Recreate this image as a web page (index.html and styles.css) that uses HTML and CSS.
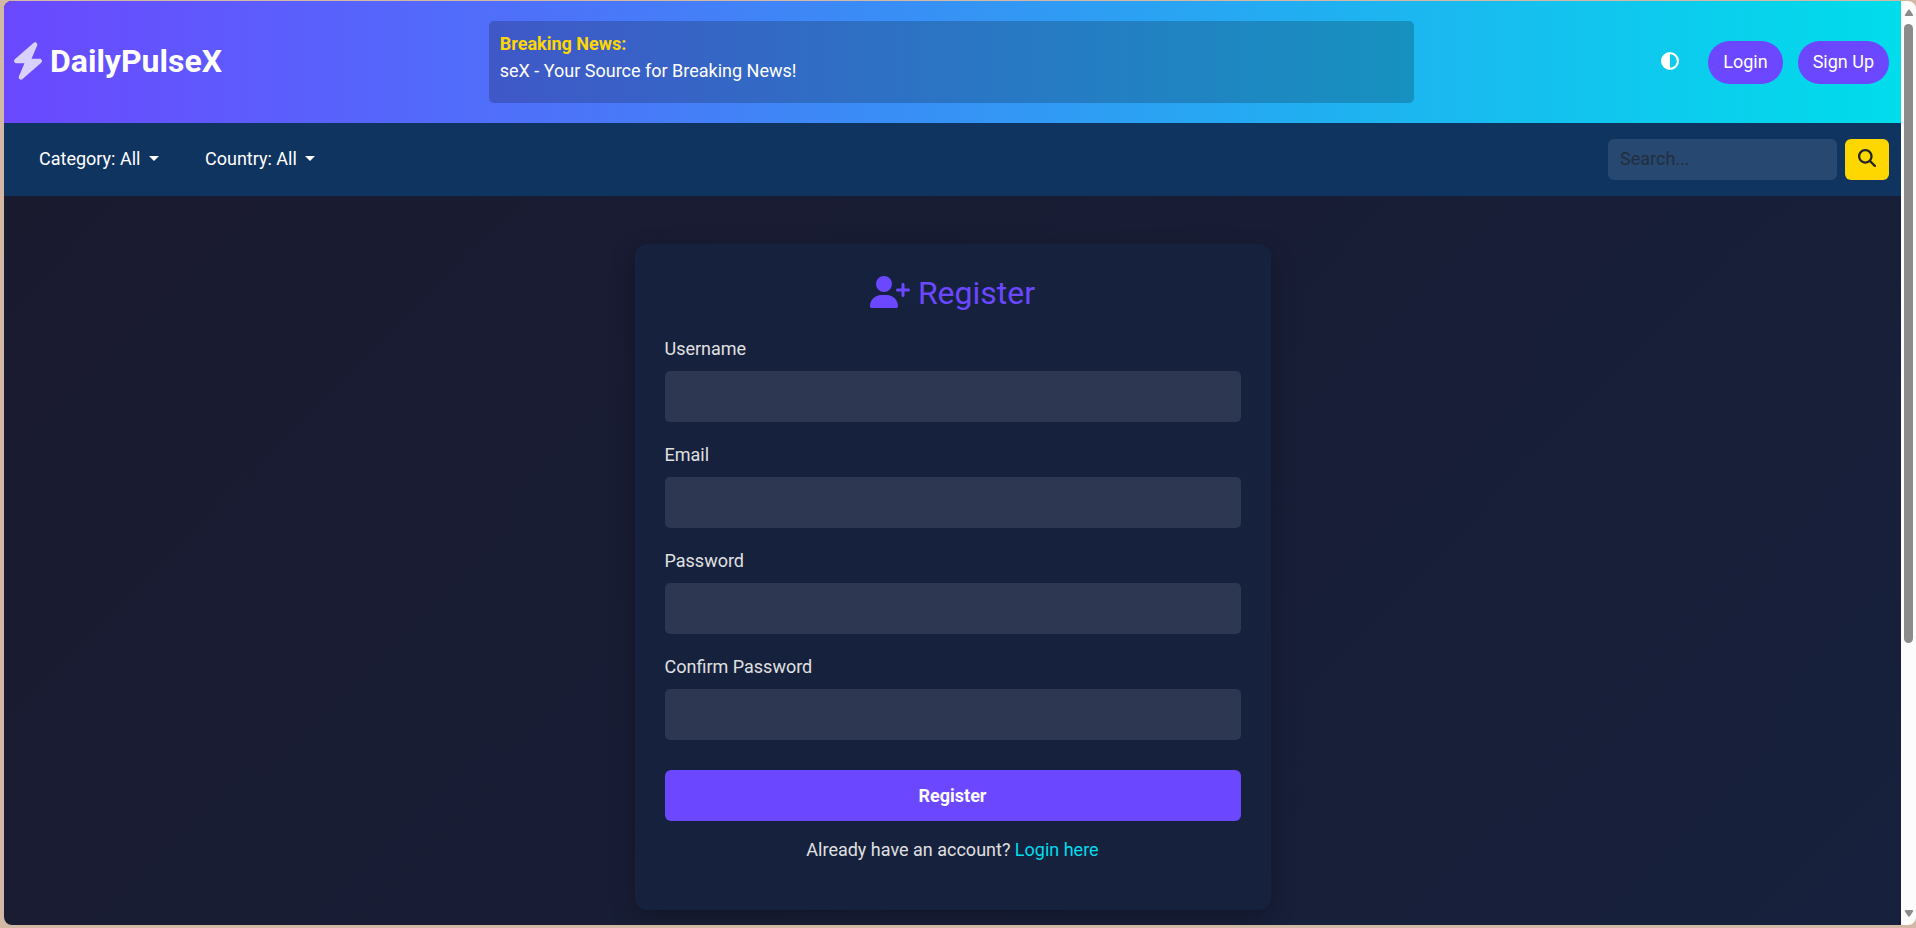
FILE: index.html
```html
<!DOCTYPE html>
<html lang="en">
<head>
<meta charset="utf-8">
<title>DailyPulseX - Register</title>
<link rel="stylesheet" href="styles.css">
</head>
<body>
<div class="window">
  <div class="page">
    <header class="header">
      <a class="brand" href="#">
        <svg class="brand-icon" viewBox="32 0 384 512" aria-hidden="true"><path d="M349.4 44.6c5.9-13.7 1.5-29.7-10.6-38.5s-28.6-8-39.9 1.8l-256 224c-10 8.8-13.6 22.9-8.9 35.3S50.7 288 64 288H175.5L98.6 467.4c-5.9 13.7-1.5 29.7 10.6 38.5s28.6 8 39.9-1.8l256-224c10-8.8 13.6-22.9 8.9-35.3s-16.6-20.7-30-20.7H272.5L349.4 44.6z"/></svg>
        <span>DailyPulseX</span>
      </a>
      <div class="ticker">
        <strong class="ticker-title">Breaking News:</strong>
        <span class="ticker-text">seX - Your Source for Breaking News!</span>
      </div>
      <div class="actions">
        <button class="theme-toggle" type="button" aria-label="Toggle theme">
          <svg class="icon" viewBox="0 0 512 512" aria-hidden="true"><path d="M448 256c0-106-86-192-192-192V448c106 0 192-86 192-192zM0 256a256 256 0 1 1 512 0A256 256 0 1 1 0 256z"/></svg>
        </button>
        <a class="pill" href="#">Login</a>
        <a class="pill" href="#">Sign Up</a>
      </div>
    </header>
    <nav class="nav">
      <div class="filters">
        <div class="filter"><select class="filter-select" aria-label="Category"><option>Category: All</option></select></div>
        <div class="filter"><select class="filter-select" aria-label="Country"><option>Country: All</option></select></div>
      </div>
      <form class="search">
        <input class="search-input" type="search" placeholder="Search..." aria-label="Search">
        <button class="search-button" type="button" aria-label="Search">
          <svg class="icon" viewBox="0 0 512 512" aria-hidden="true"><path d="M416 208c0 45.9-14.9 88.3-40 122.7L502.6 457.4c12.5 12.5 12.5 32.8 0 45.3s-32.8 12.5-45.3 0L330.7 376c-34.4 25.2-76.8 40-122.7 40C93.1 416 0 322.9 0 208S93.1 0 208 0S416 93.1 416 208zM208 352a144 144 0 1 0 0-288 144 144 0 1 0 0 288z"/></svg>
        </button>
      </form>
    </nav>
    <main class="main">
      <form class="card">
        <h2 class="card-title">
          <svg class="title-icon" viewBox="0 0 640 512" aria-hidden="true"><path d="M96 128a128 128 0 1 1 256 0A128 128 0 1 1 96 128zM0 482.3C0 383.8 79.8 304 178.3 304h91.4C368.2 304 448 383.8 448 482.3c0 16.4-13.3 29.7-29.7 29.7H29.7C13.3 512 0 498.7 0 482.3zM504 312V248H440c-13.3 0-24-10.7-24-24s10.7-24 24-24h64V136c0-13.3 10.7-24 24-24s24 10.7 24 24v64h64c13.3 0 24 10.7 24 24s-10.7 24-24 24H552v64c0 13.3-10.7 24-24 24s-24-10.7-24-24z"/></svg>
          <span>Register</span>
        </h2>
        <div class="field"><label for="username">Username</label><input class="field-input" id="username" type="text"></div>
        <div class="field"><label for="email">Email</label><input class="field-input" id="email" type="email"></div>
        <div class="field"><label for="password">Password</label><input class="field-input" id="password" type="password"></div>
        <div class="field"><label for="confirm">Confirm Password</label><input class="field-input" id="confirm" type="password"></div>
        <button class="submit" type="button">Register</button>
        <p class="login-hint">Already have an account? <a class="login-link" href="#">Login here</a></p>
      </form>
    </main>
  </div>
  <div class="scrollbar" aria-hidden="true">
    <svg class="arrow" viewBox="0 0 10 8"><path d="M4 1Q5 0 6 1L10 7L9 8H1L0 7Z"/></svg>
    <div class="track"><div class="thumb"></div></div>
    <svg class="arrow" viewBox="0 0 10 8"><path d="M4 7Q5 8 6 7L10 1L9 0H1L0 1Z"/></svg>
  </div>
</div>
</body>
</html>
```
FILE: styles.css
```css
* {
  box-sizing: border-box;
}

body {
  margin: 0;
  height: 100vh;
  padding: 1px 0 3px 4px;
  overflow: hidden;
  background: #d3b8a5;
  color: #e0e0e0;
  font: 18px/27px Roboto, "Liberation Sans", sans-serif;
}

button,
input,
select {
  margin: 0;
  border: 0;
  font: inherit;
  color: inherit;
}

a {
  color: inherit;
  text-decoration: none;
}

svg {
  display: block;
  fill: currentColor;
}

.window {
  display: flex;
  height: 100%;
  overflow: hidden;
  border-radius: 8px;
}

.page {
  flex: 1;
  min-width: 0;
  overflow: hidden;
  background: linear-gradient(135deg, #1a1a2e, #16213e) 0 0 / 100% 1332px;
}

.header {
  display: grid;
  grid-template-columns: 1fr 2fr 1fr;
  align-items: center;
  gap: 12px;
  padding: 20px 12px 20px 10px;
  background: linear-gradient(90deg, #6b48ff, #00ddeb);
  color: #fff;
}

.brand {
  display: flex;
  align-items: center;
  gap: 8px;
  padding-bottom: 2px;
  font-size: 32px;
  line-height: 48px;
  font-weight: 700;
}

.brand-icon {
  width: 28px;
  height: 38px;
  opacity: 0.75;
}

.ticker {
  display: flex;
  flex-direction: column;
  padding: 9px 11px 19px;
  border-radius: 5px;
  background: rgba(0, 0, 0, 0.2);
}

.ticker-title {
  color: #ffd700;
  font-weight: 700;
}

.ticker-text {
  color: #fff;
}

.actions {
  display: flex;
  align-items: center;
  justify-content: flex-end;
  gap: 15px;
}

.theme-toggle {
  padding: 12px 14px 14px 12px;
  background: none;
}

.icon {
  width: 18px;
  height: 18px;
}

.pill {
  padding: 7px 15px 9px;
  border-radius: 22px;
  background: #6b48ff;
}

.nav {
  display: flex;
  align-items: center;
  justify-content: space-between;
  padding: 16px 12px 16px 35px;
  background: #0f3460;
  color: #fff;
}

.filters {
  display: flex;
  gap: 46px;
  padding-bottom: 2px;
}

.filter {
  display: flex;
  align-items: center;
  gap: 8px;
}

.filter::after {
  content: "";
  border: 5px solid transparent;
  border-top-color: #fff;
  border-bottom: 0;
}

.filter-select {
  padding: 0;
  appearance: none;
  background: none;
  line-height: 27px;
}

.search {
  display: flex;
  gap: 8px;
}

.search-input {
  width: 229px;
  padding: 6px 12px 8px;
  border-radius: 6px;
  background: rgba(255, 255, 255, 0.1);
  appearance: none;
}

.search-input::placeholder {
  color: #212f40;
}

.search-button {
  padding: 10px 13px 13px;
  border-radius: 6px;
  background: #ffd700;
  color: #212529;
}

.main {
  padding: 48px 24px;
}

.card {
  max-width: 636px;
  margin: 0 auto;
  padding: 30px 30px 47px;
  border-radius: 12px;
  background: #16213e;
  box-shadow: 0 8px 24px rgba(0, 0, 0, 0.25);
}

.card-title {
  display: flex;
  align-items: center;
  justify-content: center;
  gap: 8px;
  margin: 0 0 23px;
  color: #6b48ff;
  font-size: 32px;
  line-height: 38px;
  font-weight: 400;
}

.title-icon {
  width: 40px;
  height: 32px;
  margin-bottom: 2px;
}

.field {
  display: flex;
  flex-direction: column;
  gap: 9px;
  margin-bottom: 19px;
}

.field-input {
  width: 100%;
  padding: 12px;
  height: 51px;
  border-radius: 5px;
  background: rgba(255, 255, 255, 0.1);
}

.submit {
  display: block;
  width: 100%;
  margin-top: 30px;
  padding: 12px;
  border-radius: 6px;
  background: #6b48ff;
  color: #fff;
  font-weight: 700;
}

.login-hint {
  margin: 15px 0 0;
  text-align: center;
}

.login-link {
  color: #00ddeb;
}

.scrollbar {
  display: flex;
  flex-direction: column;
  align-items: center;
  gap: 8px;
  width: 15px;
  padding: 8px 0;
  background: #fcfcfc;
  color: #8b8b8b;
}

.arrow {
  width: 10px;
  height: 7px;
}

.track {
  flex: 1;
}

.thumb {
  width: 9px;
  height: calc(70% + 4px);
  border-radius: 5px;
  background: #8b8b8b;
}
```
